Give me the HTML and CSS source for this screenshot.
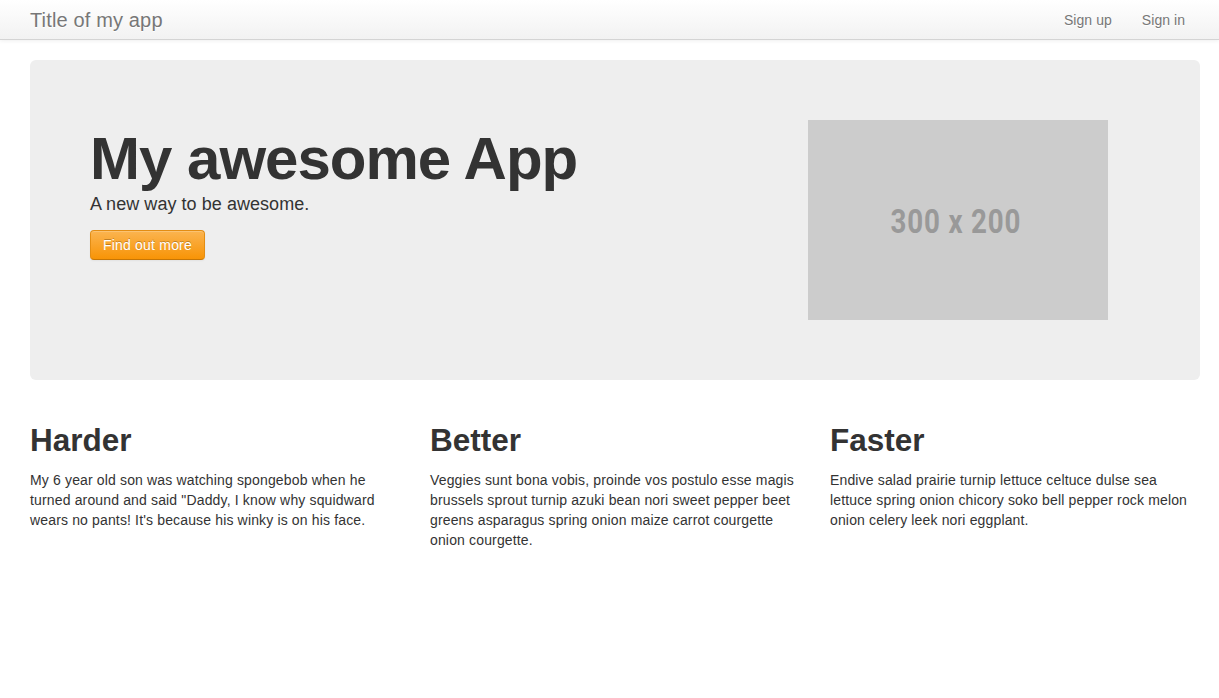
FILE: index.html
```html
<!DOCTYPE html>
<html>
<head>
<meta charset="utf-8">
<title>Title of my app</title>
<link rel="stylesheet" href="styles.css">
</head>
<body>
<header class="navbar">
  <div class="container nav-inner">
    <a class="brand" href="#">Title of my app</a>
    <nav class="nav-links">
      <a href="#">Sign up</a>
      <a href="#">Sign in</a>
    </nav>
  </div>
</header>
<main class="container">
  <section class="hero">
    <div class="hero-text">
      <h1>My awesome App</h1>
      <p>A new way to be awesome.</p>
      <a class="btn-warning" href="#">Find out more</a>
    </div>
    <div class="placeholder"><span>300 x 200</span></div>
  </section>
  <section class="features">
    <div class="feature">
      <h2>Harder</h2>
      <p>My 6 year old son was watching spongebob when he turned around and said "Daddy, I know why squidward wears no pants! It's because his winky is on his face.</p>
    </div>
    <div class="feature">
      <h2>Better</h2>
      <p>Veggies sunt bona vobis, proinde vos postulo esse magis brussels sprout turnip azuki bean nori sweet pepper beet greens asparagus spring onion maize carrot courgette onion courgette.</p>
    </div>
    <div class="feature">
      <h2>Faster</h2>
      <p>Endive salad prairie turnip lettuce celtuce dulse sea lettuce spring onion chicory soko bell pepper rock melon onion celery leek nori eggplant.</p>
    </div>
  </section>
</main>
</body>
</html>
```

FILE: styles.css
```css
html, body {
  margin: 0;
  padding: 0;
}
body {
  font-family: "Liberation Sans", Arial, sans-serif;
  font-size: 14px;
  line-height: 20px;
  letter-spacing: 0.15px;
  color: #333;
  background: #fff;
}
.container {
  width: 1170px;
  margin-left: 30px;
}
.navbar {
  height: 40px;
  background: linear-gradient(to bottom, #ffffff, #f2f2f2);
  border-bottom: 1px solid #d4d4d4;
  box-shadow: 0 1px 4px rgba(0,0,0,0.065);
  box-sizing: border-box;
}
.nav-inner {
  display: flex;
  justify-content: space-between;
  align-items: center;
  height: 39px;
}
.brand {
  font-size: 20px;
  line-height: 20px;
  color: #777;
  text-decoration: none;
  text-shadow: 0 1px 0 #fff;
}
.nav-links {
  display: flex;
}
.nav-links a {
  color: #777;
  text-decoration: none;
  padding: 10px 15px;
  font-size: 14px;
  line-height: 20px;
  letter-spacing: 0.05px;
  text-shadow: 0 1px 0 #fff;
}
.hero {
  margin-top: 20px;
  margin-bottom: 30px;
  padding: 60px;
  background: #eee;
  border-radius: 6px;
  display: flex;
  justify-content: space-between;
}
.hero h1 {
  margin: 0;
  font-size: 60px;
  line-height: 60px;
  letter-spacing: -1px;
  font-weight: bold;
  color: #333;
  padding-top: 9px;
}
.hero p {
  margin: 0 0 11px;
  font-size: 18px;
  line-height: 30px;
  letter-spacing: 0.05px;
  color: #333;
}
.btn-warning {
  display: inline-block;
  box-sizing: border-box;
  height: 30px;
  padding: 4px 12px;
  font-size: 14px;
  line-height: 20px;
  letter-spacing: 0.2px;
  color: #fff;
  text-decoration: none;
  text-shadow: 0 -1px 0 rgba(0,0,0,0.25);
  background: linear-gradient(to bottom, #fbb450, #f89406);
  border: 1px solid #e38d13;
  border-bottom-color: #c67605;
  border-radius: 4px;
  box-shadow: inset 0 1px 0 rgba(255,255,255,0.2), 0 1px 2px rgba(0,0,0,0.05);
}
.placeholder {
  width: 300px;
  height: 200px;
  background: #ccc;
  margin-right: 32px;
  display: flex;
  align-items: center;
  justify-content: center;
}
.placeholder span {
  font-family: Roboto, "Liberation Sans", sans-serif;
  font-weight: bold;
  font-size: 33px;
  color: #999;
  display: inline-block;
  transform: translate(-2px, 2px) scaleX(0.84);
  letter-spacing: 1px;
}
.features {
  display: grid;
  grid-template-columns: repeat(3, 370px);
  column-gap: 30px;
}
.feature h2 {
  margin: 10px 0;
  font-size: 31.5px;
  line-height: 40px;
  font-weight: bold;
  letter-spacing: 0;
  color: #333;
}
.feature p {
  margin: 0 0 10px;
}
```
